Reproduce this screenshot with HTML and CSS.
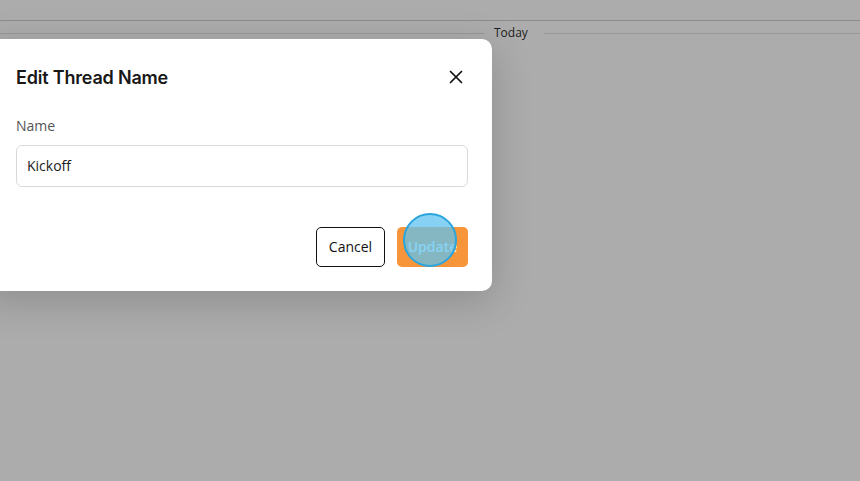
FILE: index.html
```html
<!DOCTYPE html>
<html lang="en">
<head>
  <meta charset="UTF-8">
  <meta name="viewport" content="width=device-width, initial-scale=1.0">
  <title>Edit Thread Name</title>
  <link rel="stylesheet" href="styles.css">
</head>
<body>
  <div class="page">
    <div class="topbar"></div>
    <div class="divider"><span>Today</span></div>
  </div>

  <div class="overlay">
    <div class="modal">
      <div class="modal-head">
        <h2>Edit Thread Name</h2>
        <button class="close" aria-label="Close">
          <svg width="16" height="16" viewBox="0 0 16 16">
            <path d="M2.5 2.5 L13.5 13.5 M13.5 2.5 L2.5 13.5" stroke="#111" stroke-width="1.7" stroke-linecap="round"/>
          </svg>
        </button>
      </div>
      <label class="label" for="name">Name</label>
      <input id="name" class="input" type="text" value="Kickoff">
      <div class="actions">
        <button class="btn cancel">Cancel</button>
        <button class="btn update">Update
          <span class="click"></span>
        </button>
      </div>
    </div>
  </div>
</body>
</html>
```

FILE: styles.css
```css
html, body {
  width: 100%;
  height: 100%;
  padding: 0;
  margin: 0;
}

body {
  background: #acacac;
  font-family: "Open Sans", "Noto Sans", sans-serif;
  overflow: hidden;
  position: relative;
}

.page {
  height: 100%;
}

.topbar {
  height: 20px;
  border-bottom: 1px solid #8c8c8c;
}

.divider {
  display: flex;
  align-items: center;
  height: 24px;
}

.divider::before,
.divider::after {
  content: '';
  flex: 1;
  height: 1px;
  background: #979797;
}

.divider::before {
  flex: 0 0 484px;
  margin-right: 10px;
}

.divider::after {
  margin-left: 16px;
}

.divider span {
  font-size: 12px;
  color: #222;
  line-height: 1;
}

/* dialog */
.overlay {
  position: absolute;
  left: -20px;
  top: 39px;
}

.modal {
  width: 512px;
  box-sizing: border-box;
  padding: 0 24px 24px 36px;
  background: #fff;
  border-radius: 10px;
  box-shadow: 0 10px 40px rgba(0, 0, 0, .18);
}

.modal-head {
  display: flex;
  align-items: center;
  justify-content: space-between;
  height: 76px;
}

.modal-head h2 {
  margin: 0;
  font-family: Inter, "Noto Sans", sans-serif;
  font-size: 18px;
  font-weight: 600;
  letter-spacing: -0.2px;
  color: #181818;
}

.close {
  border: 0;
  background: none;
  padding: 0;
  width: 24px;
  height: 24px;
  display: flex;
  align-items: center;
  justify-content: center;
  margin-right: 0;
}

.label {
  display: block;
  font-size: 14px;
  color: #555;
  line-height: 20px;
  padding-top: 1px;
}

.input {
  display: block;
  width: 100%;
  box-sizing: border-box;
  height: 42px;
  margin-top: 9px;
  padding: 0 10px 1px;
  border: 1px solid #d9d9d9;
  border-radius: 6px;
  font-family: "Open Sans", "Noto Sans", sans-serif;
  font-size: 14px;
  color: #1a1a1a;
  outline: none;
}

.actions {
  display: flex;
  justify-content: flex-end;
  gap: 12px;
  margin-top: 40px;
}

.btn {
  height: 40px;
  border-radius: 5px;
  font-family: "Open Sans", "Noto Sans", sans-serif;
  font-size: 14px;
  font-weight: 500;
  padding: 0 10px 2px;
  cursor: pointer;
}

.cancel {
  width: 69px;
  background: #fff;
  border: 1px solid #111;
  color: #111;
}

.update {
  position: relative;
  width: 71px;
  background: #f7953a;
  border: 0;
  color: #fff;
  font-weight: 600;
}

/* click marker */
.click {
  position: absolute;
  left: 6px;
  top: -14px;
  width: 50px;
  height: 50px;
  border-radius: 50%;
  border: 2px solid #2aa5de;
  background: rgba(95, 195, 240, .75);
}
```
